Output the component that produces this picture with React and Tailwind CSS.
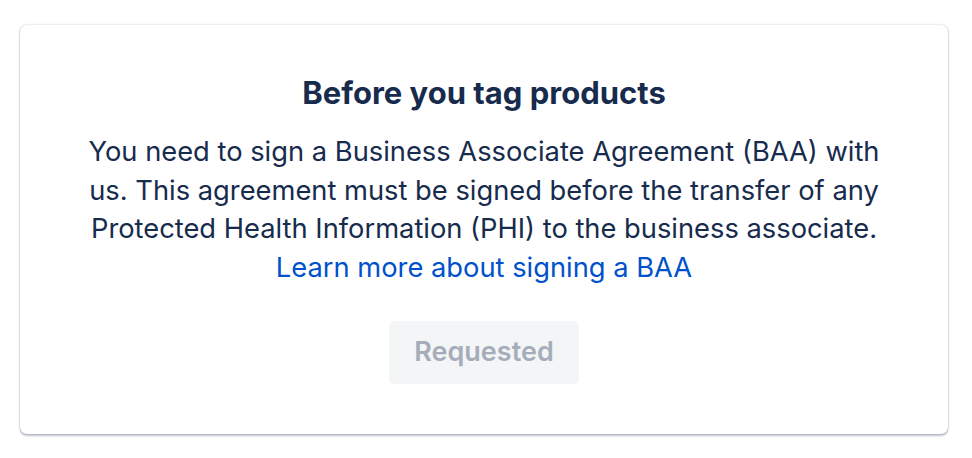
export default function App() {
  return (
    <div className="min-h-screen bg-white pt-[25px] pl-[20px] pr-[24px] font-['Inter','Noto_Sans',sans-serif]">
      <div className="h-[409px] rounded-[7px] bg-white shadow-[0_2px_2px_rgba(9,30,66,0.25),0_0_2px_rgba(9,30,66,0.31)] pt-[50px] flex flex-col items-center text-center">
        <h2 className="text-[31px] leading-[36px] font-bold text-[#172B4D]">
          Before you tag products
        </h2>
        <p className="mt-[22px] text-[27.3px] leading-[38.5px] text-[#172B4D] whitespace-nowrap">
          You need to sign a Business Associate Agreement (BAA) with
          <br />
          us. This agreement must be signed before the transfer of any
          <br />
          Protected Health Information (PHI) to the business associate.
          <br />
          <a href="#" className="text-[#0052CC]">Learn more about signing a BAA</a>
        </p>
        <button
          disabled
          className="mt-[34px] w-[190px] h-[63px] rounded-[6px] bg-[#F4F5F7] text-[27px] font-semibold text-[#A5ADBA]"
        >
          Requested
        </button>
      </div>
    </div>
  )
}
